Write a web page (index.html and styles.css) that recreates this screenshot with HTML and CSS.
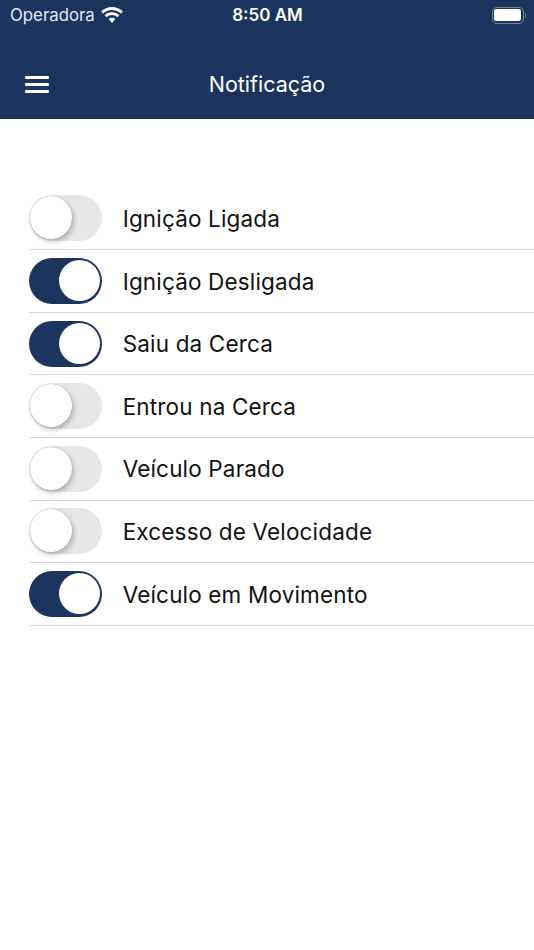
FILE: index.html
```html
<!DOCTYPE html>
<html lang="pt">
<head>
<meta charset="utf-8">
<title>Notificação</title>
<link rel="stylesheet" href="styles.css">
</head>
<body>
<header class="top">
  <div class="status">
    <div class="status-left">
      <span class="carrier">Operadora</span>
      <svg class="wifi" width="22" height="16" viewBox="1.500 1 19 14"><path fill="#fff" d="M11 3.600c3 0 5.700 1.100 7.800 3.100l1.700-1.800C18 2.400 14.600 1 11 1S4 2.400 1.500 4.900l1.700 1.800C5.300 4.700 8 3.600 11 3.600z"/><path fill="#fff" d="M11 8.100c1.800 0 3.500.7 4.800 1.900l1.700-1.800C15.800 6.600 13.500 5.600 11 5.600S6.200 6.600 4.500 8.200L6.200 10c1.300-1.200 3-1.900 4.800-1.900z"/><path fill="#fff" d="M11 10.500c-1.100 0-2.100.4-2.900 1.100L11 15l2.900-3.400c-.8-.7-1.800-1.100-2.900-1.100z"/></svg>
    </div>
    <span class="time">8:50 AM</span>
    <div class="battery"><span class="battery-body"><span class="battery-fill"></span></span><span class="battery-cap"></span></div>
  </div>
  <div class="nav">
    <div class="menu"><span></span><span></span><span></span></div>
    <h1 class="title">Notificação</h1>
    <div></div>
  </div>
</header>
<main class="list">
  <div class="row"><span class="switch"><span class="knob"></span></span><span class="label">Ignição Ligada</span></div>
  <div class="row"><span class="switch on"><span class="knob"></span></span><span class="label">Ignição Desligada</span></div>
  <div class="row"><span class="switch on"><span class="knob"></span></span><span class="label">Saiu da Cerca</span></div>
  <div class="row"><span class="switch"><span class="knob"></span></span><span class="label">Entrou na Cerca</span></div>
  <div class="row"><span class="switch"><span class="knob"></span></span><span class="label">Veículo Parado</span></div>
  <div class="row"><span class="switch"><span class="knob"></span></span><span class="label">Excesso de Velocidade</span></div>
  <div class="row"><span class="switch on"><span class="knob"></span></span><span class="label">Veículo em Movimento</span></div>
</main>
</body>
</html>
```

FILE: styles.css
```css
* { box-sizing: border-box; }
html, body { margin: 0; height: 950px; overflow: hidden; background: #fff; }
body { font-family: Inter, "Liberation Sans", sans-serif; color: #111; }

.top { height: 119px; background: #1c355e; color: #fff; display: flex; flex-direction: column; }
.status { height: 30px; padding: 0 8px 0 10px; display: grid; grid-template-columns: 1fr auto 1fr; align-items: center; }
.status-left { display: flex; align-items: center; gap: 6px; }
.carrier { font-size: 16.800px; color: #e6e9ef; }
.wifi { display: block; margin-top: -1px; }
.time { font-size: 17px; font-weight: 600; margin-left: -1px; }
.battery { justify-self: end; display: flex; align-items: center; }
.battery-body { width: 32px; height: 17px; border: 1.500px solid #76859e; border-radius: 5px; padding: 1.500px; display: block; }
.battery-fill { display: block; width: 100%; height: 100%; background: #fff; border-radius: 2.500px; }
.battery-cap { width: 1.500px; height: 5px; background: #76859e; margin-left: 1px; border-radius: 0 1px 1px 0; }

.nav { flex: 1; display: grid; grid-template-columns: 1fr auto 1fr; align-items: center; padding: 19px 0 0 25px; }
.menu { width: 24px; display: flex; flex-direction: column; gap: 4px; }
.menu span { display: block; height: 3px; background: #fff; border-radius: 1px; }
.title { margin: 0 0 0 -25px; font-size: 21.500px; font-weight: 400; }

.list { padding: 68.700px 0 0 29px; display: flex; flex-direction: column; }
.row { height: 62.600px; display: flex; align-items: center; gap: 20.700px; border-bottom: 1px solid #d8d8d8; }
.label { font-size: 22.500px; letter-spacing: .16px; }
.switch { width: 73px; height: 46px; border-radius: 23px; background: #e7e7e7; position: relative; flex: none; display: block; }
.knob { position: absolute; left: .5px; top: .7px; width: 42.500px; height: 43px; border-radius: 50%; background: #fff; box-shadow: 2px 3px 5px rgba(0, 0, 0, .22), 0 0 1px rgba(0, 0, 0, .35); }
.switch.on { background: #1c355e; }
.switch.on .knob { left: 29.500px; top: 2.400px; width: 41px; height: 41px; box-shadow: none; }
```
